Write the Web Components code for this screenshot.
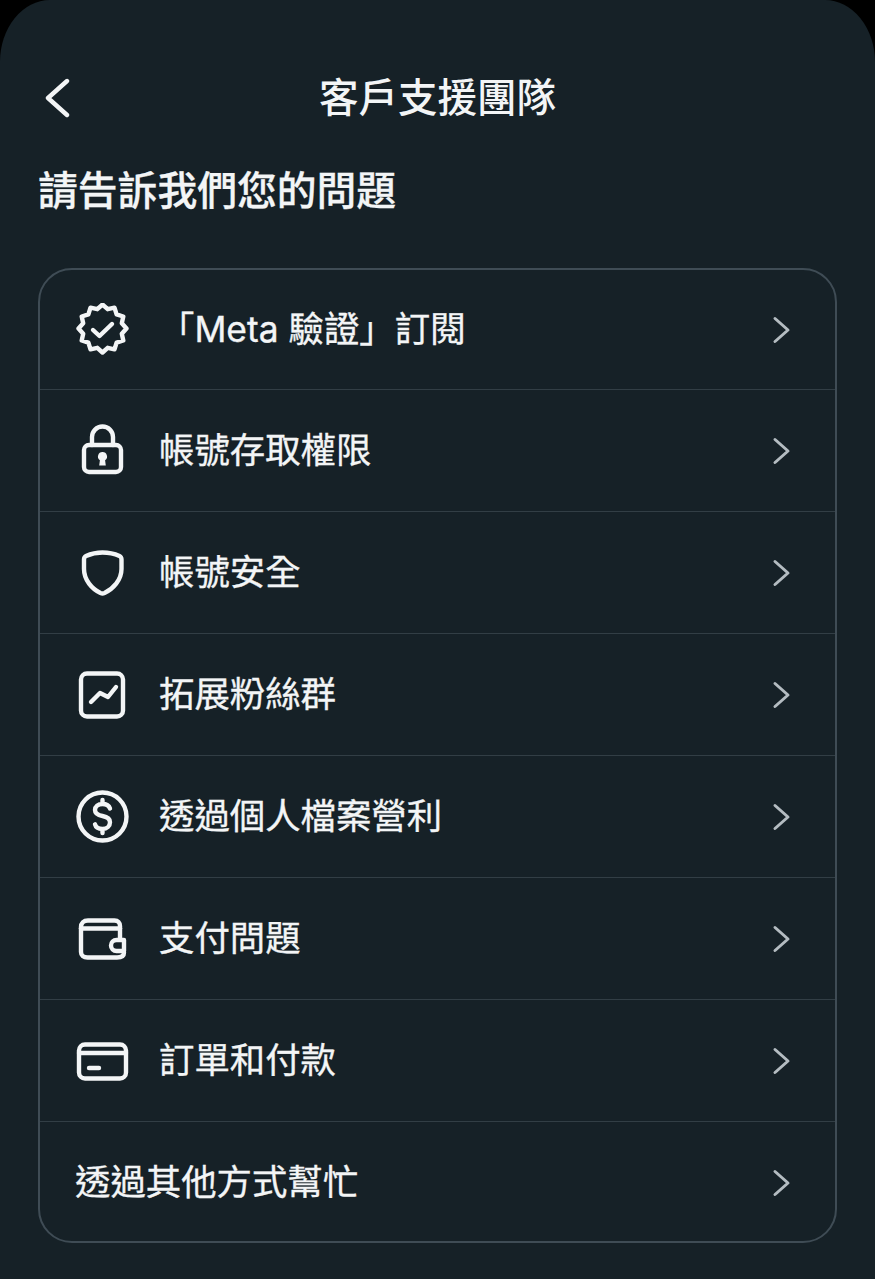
<!DOCTYPE html>
<html lang="zh-Hant">
<head>
<meta charset="utf-8">
<title>客戶支援團隊</title>
<style>
    html, body { margin: 0; background: #000; }
    body { font-family: Inter, "Noto Sans CJK TC", sans-serif; color: #f3f5f6; }
</style>
</head>
<body>
<template id="support-row-template">
    <style>
        :host {
            display: flex;
            align-items: center;
            height: 121px;
            padding: 0 44px 0 35px;
            border-top: 1px solid #323e45;
            font-size: 35.4px;
            line-height: 44px;
            -webkit-text-stroke: .35px currentColor;
        }
        :host([first]) { border-top: 0; height: 119px; }
        .icon { width: 54px; height: 54px; margin-right: 30px; flex: none; }
        ::slotted(svg) { display: block; width: 54px; height: 54px; }
        .label { flex: 1; white-space: nowrap; }
        .chevron { width: 20px; height: 28px; flex: none; }
    </style>
    <div class="icon"><slot name="icon"></slot></div>
    <div class="label"><slot></slot></div>
    <svg class="chevron" viewBox="0 0 20 28" fill="none" stroke="#b4bcc1" stroke-width="3" stroke-linecap="round" stroke-linejoin="round"><path d="M4 2.500 17 14 4 25.500"/></svg>
</template>

<support-screen>
    <span slot="title">客戶支援團隊</span>
    <span slot="heading">請告訴我們您的問題</span>

    <support-row first>
        <svg slot="icon" viewBox="0 0 54 54" fill="none" stroke="#f3f5f6" stroke-width="4.400" stroke-linejoin="round" stroke-linecap="round">
            <path d="M27.500 1.500 32.700 6.200 39.500 4.700 41.600 11.400 48.300 13.500 46.800 20.300 51.500 25.500 46.800 30.700 48.300 37.500 41.600 39.600 39.500 46.300 32.700 44.800 27.500 49.500 22.300 44.800 15.500 46.300 13.400 39.600 6.700 37.500 8.200 30.700 3.500 25.500 8.200 20.300 6.700 13.500 13.400 11.400 15.500 4.700 22.300 6.200Z"/>
            <path d="M18 27 24.500 33 37 21"/>
        </svg>
        「Meta 驗證」訂閱
    </support-row>
    <support-row>
        <svg slot="icon" viewBox="0 0 54 54" fill="none" stroke="#f3f5f6" stroke-width="4.400" stroke-linejoin="round" stroke-linecap="round">
            <rect x="9" y="21" width="37" height="27" rx="5"/>
            <path d="M17 21v-8a10.500 10.500 0 0 1 21 0v8"/>
            <path fill="#f3f5f6" stroke="none" d="M27.500 28a4.500 4.500 0 0 1 2.600 8.200l.7 5.300h-6.600l.7-5.300A4.500 4.500 0 0 1 27.500 28Z"/>
        </svg>
        帳號存取權限
    </support-row>
    <support-row>
        <svg slot="icon" viewBox="0 0 54 54" fill="none" stroke="#f3f5f6" stroke-width="4.400" stroke-linejoin="round" stroke-linecap="round">
            <path d="M27.500 6.500C33 6.500 40 8 44.500 10c1.500.7 2 1.800 2 3.500v9.500C46.500 34 38 43 29.500 47c-1.400.6-2.600.6-4 0C17 43 9 34 9 23v-9.500C9 11.800 9.500 10.700 11 10 15.500 8 22 6.500 27.500 6.500Z"/>
        </svg>
        帳號安全
    </support-row>
    <support-row>
        <svg slot="icon" viewBox="0 0 54 54" fill="none" stroke="#f3f5f6" stroke-width="4.400" stroke-linejoin="round" stroke-linecap="round">
            <rect x="6" y="5.500" width="42" height="43" rx="6"/>
            <path d="M16 34 25 25 33 29 41 19"/>
        </svg>
        拓展粉絲群
    </support-row>
    <support-row>
        <svg slot="icon" viewBox="0 0 54 54" fill="none" stroke="#f3f5f6" stroke-width="4.400" stroke-linejoin="round" stroke-linecap="round">
            <circle cx="27.500" cy="26.500" r="24"/>
            <path d="M35 18.500c-1-2.800-4-4.500-7.500-4.500-4.500 0-7.500 2.500-7.500 6s3 5.200 7.500 6c4.500.8 7.500 2.500 7.500 6.200S32 39 27.500 39c-3.800 0-6.800-1.800-7.500-4.700M27.500 10v4M27.500 39v4"/>
        </svg>
        透過個人檔案營利
    </support-row>
    <support-row>
        <svg slot="icon" viewBox="0 0 54 54" fill="none" stroke="#f3f5f6" stroke-width="4.400" stroke-linejoin="round" stroke-linecap="round">
            <path d="M45 27V14c0-3.500-2-5.500-5.500-5.500H13C8.500 8.500 6 11 6 15v25c0 3.500 2.500 5.500 6.500 5.500H42c4 0 7-1.500 7-5"/>
            <path d="M6 16.500H45"/>
            <path d="M49 28H41.500a5.500 5.500 0 0 0 0 11H49Z"/>
        </svg>
        支付問題
    </support-row>
    <support-row>
        <svg slot="icon" viewBox="0 0 54 54" fill="none" stroke="#f3f5f6" stroke-width="4.400" stroke-linejoin="round" stroke-linecap="round">
            <rect x="4" y="10.500" width="47" height="34" rx="6"/>
            <path d="M4 19H51"/>
            <path d="M14 34H24"/>
        </svg>
        訂單和付款
    </support-row>
    <support-row no-icon>透過其他方式幫忙</support-row>
</support-screen>

<script>
class SupportRow extends HTMLElement {
    constructor() {
        super();
        const shadowRoot = this.attachShadow({mode: 'open'});
        shadowRoot.appendChild(document.querySelector('#support-row-template').content.cloneNode(true));
    }

    connectedCallback() {
        // rows without an icon let the label start at the row padding
        if(this.hasAttribute('no-icon')) {
            this.shadowRoot.querySelector('.icon').style.display = 'none';
        }
    }
}

class SupportScreen extends HTMLElement {
    constructor() {
        super();
        const shadowRoot = this.attachShadow({mode: 'open'});
        shadowRoot.innerHTML = `
            <style>
                :host {
                    display: block;
                    box-sizing: border-box;
                    width: 875px;
                    height: 1279px;
                    padding: 0 38px;
                    background: #162127;
                    border-radius: 50px 50px 0 0 / 62px 62px 0 0;
                    overflow: hidden;
                }
                header {
                    display: grid;
                    grid-template-columns: 60px 1fr 60px;
                    align-items: center;
                    height: 50px;
                    padding-top: 73px;
                }
                header svg { display: block; width: 30px; height: 40px; margin-left: 5px; }
                .title {
                    text-align: center;
                    font-size: 39.5px;
                    line-height: 50px;
                    font-weight: 500;
                }
                .heading {
                    margin-top: 43px;
                    font-size: 39.8px;
                    line-height: 50px;
                    font-weight: 500;
                    white-space: nowrap;
                    -webkit-text-stroke: .3px currentColor;
                }
                .card {
                    margin-top: 52px;
                    border: 2px solid #3f4c55;
                    border-radius: 34px;
                    height: 971px;
                    overflow: hidden;
                }
            </style>
            <header>
                <svg viewBox="0 0 30 40" fill="none" stroke="#f3f5f6" stroke-width="4.400" stroke-linecap="round" stroke-linejoin="round"><path d="M24 3 5 20 24 37"/></svg>
                <div class="title"><slot name="title"></slot></div>
                <span></span>
            </header>
            <div class="heading"><slot name="heading"></slot></div>
            <div class="card"><slot></slot></div>
        `;
    }
}

customElements.define('support-row', SupportRow);
customElements.define('support-screen', SupportScreen);
</script>
</body>
</html>
